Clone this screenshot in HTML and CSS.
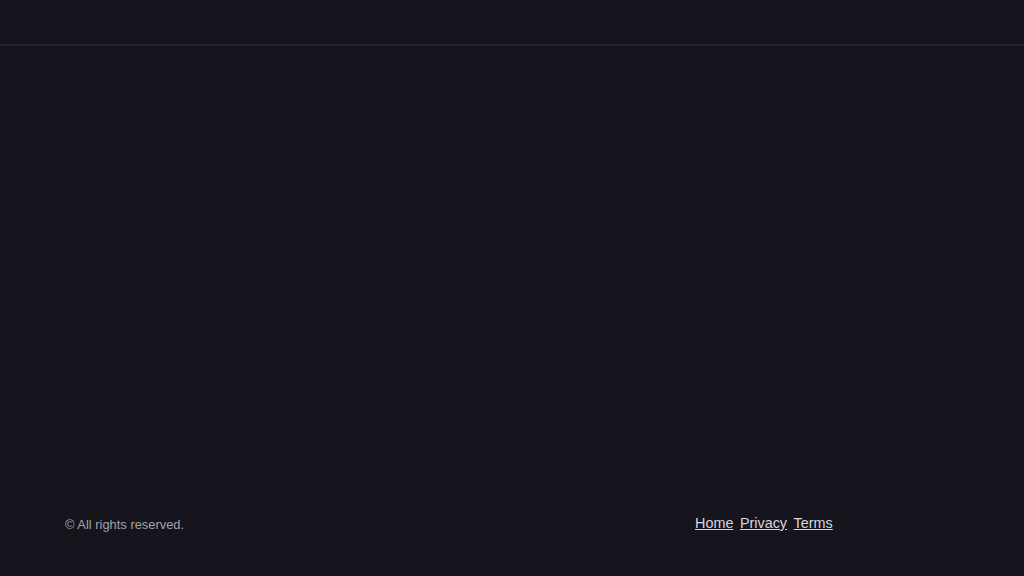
FILE: index.html
```html
<!DOCTYPE html>
<html lang="en">
<head>
<meta charset="utf-8">
<title>Page</title>
<link rel="stylesheet" href="styles.css">
</head>
<body>
<div class="page">
  <header class="site-header"></header>
  <main class="site-main"></main>
  <footer class="site-footer">
    <p class="copyright">© All rights reserved.</p>
    <nav class="footer-links">
      <a href="#">Home</a>
      <a href="#">Privacy</a>
      <a href="#">Terms</a>
    </nav>
  </footer>
</div>
</body>
</html>
```
FILE: styles.css
```css
html, body {
  margin: 0;
  padding: 0;
  background: #16151e;
}
body {
  font-family: "Liberation Sans", Arial, sans-serif;
}
.page {
  min-height: 100vh;
  display: flex;
  flex-direction: column;
}
.site-header {
  border-bottom: 2px solid #232228;
  box-sizing: border-box;
  height: 46px;
}
.site-main {
  flex: 1;
}
.site-footer {
  display: grid;
  grid-template-columns: 630px auto;
  align-items: start;
  padding: 0 64px 44px 65px;
}
.copyright {
  margin: 2px 0 0 0;
  font-size: 12.9px;
  line-height: 15px;
  color: #a3a2aa;
}
.footer-links {
  display: flex;
  gap: 6.5px;
  font-size: 14.4px;
  line-height: 16px;
}
.footer-links a {
  color: #d6d5dc;
  text-decoration: underline;
}
```
